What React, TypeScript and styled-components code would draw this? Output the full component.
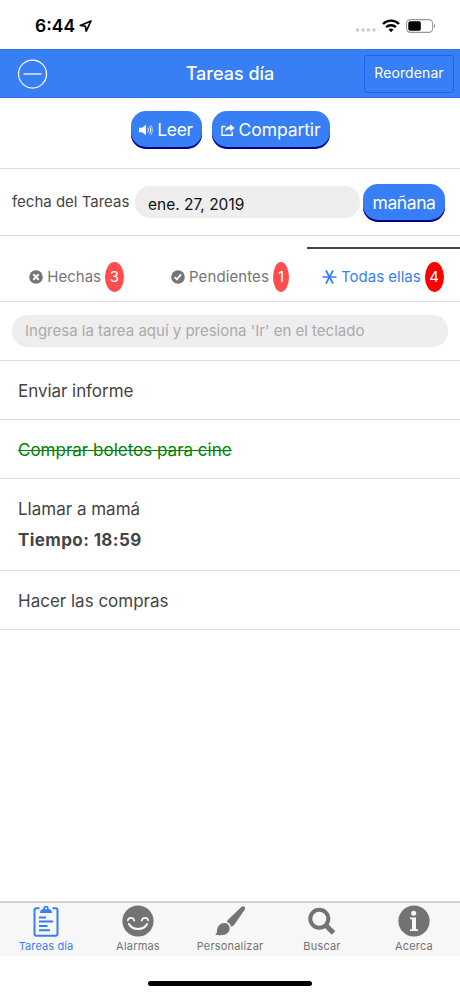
import React from "react";
import styled, { createGlobalStyle } from "styled-components";

const GlobalStyle = createGlobalStyle`
  *, *::before, *::after { box-sizing: border-box; }
  body { margin: 0; background: #fff; font-family: Inter, "Liberation Sans", sans-serif; }
  svg { display: block; flex: none; }
`;

const Screen = styled.div`
  width: 460px;
  height: 996px;
  display: flex;
  flex-direction: column;
  background: #fff;
  color: #444;
  overflow: hidden;
`;

const Text = styled.span<{ $size: number; $spacing?: number; $weight?: number }>`
  font-size: ${(p) => p.$size}px;
  letter-spacing: ${(p) => p.$spacing ?? 0}px;
  font-weight: ${(p) => p.$weight ?? 400};
  line-height: 24px;
  white-space: nowrap;
`;

const StatusBar = styled.div`
  height: 49px;
  flex: none;
  display: flex;
  align-items: center;
  justify-content: space-between;
  padding: 2px 24px 0 35px;
  color: #000;
`;

const StatusGroup = styled.div<{ $gap: number }>`
  display: flex;
  align-items: center;
  gap: ${(p) => p.$gap}px;
`;

const Header = styled.header`
  height: 49px;
  flex: none;
  display: grid;
  grid-template-columns: 1fr auto 1fr;
  align-items: center;
  background: #387ef5;
  border-top: 1px solid #3177e8;
  border-bottom: 1px solid #2a70eb;
  color: #fff;
  padding: 0 6px 0 6px;
`;

const HeaderStart = styled.div`
  padding-left: 12px;
`;

const ReorderButton = styled.button`
  justify-self: end;
  width: 90px;
  height: 38px;
  padding: 0 0 1px;
  display: flex;
  align-items: center;
  justify-content: center;
  border: 1px solid #1565ee;
  border-radius: 3px;
  background: transparent;
  color: #fff;
  font-family: inherit;
`;

const Actions = styled.section`
  height: 71px;
  flex: none;
  display: flex;
  justify-content: center;
  gap: 10px;
  padding-top: 13px;
  border-bottom: 1px solid #dcdcdc;
`;

const PillButton = styled.button<{ $width: number; $gap?: number }>`
  width: ${(p) => p.$width}px;
  height: 38px;
  padding: 0 0 1px;
  display: flex;
  align-items: center;
  justify-content: center;
  gap: ${(p) => p.$gap ?? 0}px;
  flex: none;
  border: 0;
  border-radius: 15px;
  background: #387ef5;
  box-shadow: inset 0 -2px 0 #00008b;
  color: #fff;
  font-family: inherit;
`;

const DateRow = styled.section`
  height: 67px;
  flex: none;
  display: flex;
  align-items: center;
  padding: 2px 15px 0 12px;
  border-bottom: 1px solid #dcdcdc;
`;

const DateLabel = styled.label`
  width: 123px;
  flex: none;
  padding-bottom: 2px;
`;

const DateField = styled.div`
  width: 225px;
  height: 32px;
  margin: 0 3px 2px 0;
  padding: 7px 0 0 13px;
  border-radius: 15px;
  background: #eee;
  color: #111;
`;

const Filters = styled.nav`
  height: 66px;
  flex: none;
  display: grid;
  grid-template-columns: repeat(3, 1fr);
  padding-top: 11px;
  border-bottom: 1px solid #dcdcdc;
`;

const Filter = styled.div<{ $active?: boolean }>`
  display: flex;
  align-items: center;
  justify-content: center;
  gap: 4px;
  padding: 4px ${(p) => (p.$active ? 1 : 0)}px 0 0;
  border-top: 2px solid ${(p) => (p.$active ? "#444" : "transparent")};
  color: ${(p) => (p.$active ? "#387ef5" : "#757575")};
`;

const Count = styled.span<{ $width: number; $active?: boolean }>`
  width: ${(p) => p.$width}px;
  height: 30px;
  display: flex;
  align-items: center;
  justify-content: center;
  border-radius: 50%;
  background: ${(p) => (p.$active ? "#f00" : "#ff4c4c")};
  color: #fff;
`;

const Entry = styled.section`
  height: 59px;
  flex: none;
  padding: 13px 12px 0;
  border-bottom: 1px solid #dcdcdc;
`;

const EntryField = styled.div`
  height: 32px;
  padding: 4px 13px;
  border-radius: 15px;
  background: #eee;
  color: #aaa;
`;

const TaskList = styled.ul`
  flex: 1;
  margin: 0;
  padding: 0;
  list-style: none;
`;

const Task = styled.li<{ $done?: boolean }>`
  display: flex;
  flex-direction: column;
  gap: 7px;
  padding: 18px 18px 16px;
  border-bottom: 1px solid #dcdcdc;
  color: ${(p) => (p.$done ? "#008000" : "#444")};
  span { align-self: flex-start; text-decoration: ${(p) => (p.$done ? "line-through" : "none")}; }
  span + span { margin-bottom: 2px; }
`;

const TabBar = styled.nav`
  height: 55px;
  flex: none;
  display: grid;
  grid-template-columns: repeat(5, 1fr);
  border-top: 2px solid #d2d2d2;
  background: #f7f7f7;
`;

const Tab = styled.div<{ $active?: boolean }>`
  display: flex;
  flex-direction: column;
  align-items: center;
  padding-top: 2px;
  color: ${(p) => (p.$active ? "#387ef5" : "#737373")};
  span { line-height: 16px; margin-top: 1px; }
`;

const HomeArea = styled.div`
  height: 40px;
  flex: none;
  display: flex;
  justify-content: center;
  padding-top: 25px;
`;

const HomeIndicator = styled.div`
  width: 164px;
  height: 5px;
  border-radius: 3px;
  background: #000;
`;

const LocationIcon = () => (
  <svg width="14" height="14" viewBox="0 0 14 14" fill="none" stroke="#000" strokeWidth="1.7" strokeLinejoin="round">
    <path d="M12 2 1.300 6.500l5 .7.9 5z" />
  </svg>
);

const SignalIcon = () => (
  <svg width="21" height="14" viewBox="0 0 21 14" fill="#ccc">
    <circle cx="2.500" cy="11" r="1.800" /><circle cx="8" cy="11" r="1.800" />
    <circle cx="13.500" cy="11" r="1.800" /><circle cx="19" cy="11" r="1.800" />
  </svg>
);

const WifiIcon = () => (
  <svg width="18" height="14" viewBox="0 0 18 14" fill="none" stroke="#000" strokeWidth="2.400">
    <path d="M1 5C5.400.5 12.600.5 17 5" /><path d="M4.100 8.200c2.700-2.700 7.100-2.700 9.800 0" />
    <path d="M6.500 10.500c1.400-1.400 3.600-1.400 5 0L9 13.200z" fill="#000" stroke="none" />
  </svg>
);

const BatteryIcon = () => (
  <svg width="30" height="14" viewBox="0 0 30 14">
    <rect x=".6" y=".6" width="26" height="12.8" rx="3.8" fill="none" stroke="#999" strokeWidth="1.1" />
    <rect x="2.3" y="2.3" width="12.5" height="9.4" rx="1.8" fill="#000" />
    <path d="M28 4.8v4.4c1.800-.8 1.800-3.600 0-4.400z" fill="#999" />
  </svg>
);

const MinusCircleIcon = () => (
  <svg width="30" height="30" viewBox="0 0 30 30" fill="none" stroke="#fff" strokeWidth="1.25">
    <circle cx="14.5" cy="15" r="14" /><path d="M5.5 15h18" />
  </svg>
);

const SpeakerIcon = () => (
  <svg width="14" height="12" viewBox="0 0 14 12" fill="none" stroke="#fff" strokeWidth="1">
    <path d="M0 3.800h3L7 .7v10.600L3 8.200H0z" fill="#fff" stroke="none" />
    <path d="M8.600 3.700c1.100 1.300 1.100 3.300 0 4.600M10.200 2.300c2 2.100 2 5.300 0 7.400" />
    <path d="M11.700 1c2.100 2.700 2.100 7.300 0 10" opacity=".7" />
  </svg>
);

const ShareIcon = () => (
  <svg width="14" height="12" viewBox="0 0 14 12">
    <path d="M4.500 2.500H1v8.700h10.200V7.800" fill="none" stroke="#fff" strokeWidth="1.400" />
    <path d="M9.200.3 13.700 4 9.200 7.400V5.200C6.700 5.100 5 5.900 3.700 8 4 5 5.800 2.600 9.200 2.300z" fill="#fff" />
  </svg>
);

const CloseCircleIcon = () => (
  <svg width="14" height="14" viewBox="0 0 14 14">
    <circle cx="7" cy="7" r="6.800" fill="#757575" />
    <path d="m4.300 4.300 5.400 5.400m0-5.400L4.300 9.700" stroke="#fff" strokeWidth="2" />
  </svg>
);

const CheckCircleIcon = () => (
  <svg width="14" height="14" viewBox="0 0 14 14">
    <circle cx="7" cy="7" r="6.800" fill="#757575" />
    <path d="m3.700 7.200 2.200 2.200 4.100-5" fill="none" stroke="#fff" strokeWidth="1.700" />
  </svg>
);

const AsteriskIcon = () => (
  <svg width="15" height="14" viewBox="0 0 15 14" fill="none" stroke="#387ef5" strokeWidth="1.700">
    <path d="M.5 7h14M4 .5l7 13M11 .5l-7 13" />
  </svg>
);

const ClipboardIcon = () => (
  <svg width="32" height="32" viewBox="0 0 32 32" fill="none" stroke="currentColor" strokeWidth="2">
    <path d="M9.500 3.300H6.500c-1.200 0-2 .8-2 2v23.500c0 1.200.8 2 2 2h19c1.200 0 2-.8 2-2V5.300c0-1.200-.8-2-2-2H22.500" />
    <path d="M10 7.900c0-2.400 1.200-3.400 3.200-3.800C13.300 2.200 14.100.8 16 .8s2.700 1.400 2.800 3.300c2 .4 3.200 1.400 3.200 3.800z" fill="currentColor" stroke="none" />
    <circle cx="16" cy="3.600" r="1" fill="#f7f7f7" stroke="none" />
    <path d="M9 12.500h7M9 16.600h14M9 20.900h8.500M9 25.200h11" />
  </svg>
);

const SmileIcon = () => (
  <svg width="32" height="32" viewBox="0 0 32 32" fill="none" stroke="#f7f7f7" strokeWidth="1.800" strokeLinecap="round">
    <circle cx="16" cy="16" r="15.600" fill="currentColor" stroke="none" />
    <path d="M5.800 15.300c.8-3.300 5.800-3 6.400.3M19.800 15.600c.6-3.300 5.600-3.600 6.400-.3" />
    <path d="M7 19c3.500 6.600 14.500 6.600 18 0" strokeWidth="2.100" />
  </svg>
);

const BrushIcon = () => (
  <svg width="32" height="32" viewBox="0 0 32 32" fill="currentColor">
    <path d="M27.600 1.800c2-1.500 4.500.6 3.200 2.700l-10.500 15.200c-.8 1-2.100 1.700-3.400 2-.3-2.500-1.600-4-4-4.800.4-1.300 1.300-2.500 2.200-3.200z" />
    <path d="M11.200 18c3.500.6 5.500 4.300 4 7.700-1.600 4-6.900 5.200-14.200 4.100 1.800-.9 1.900-2.100 2-4.500.3-4.500 4.100-8 8.200-7.300z" />
  </svg>
);

const SearchIcon = () => (
  <svg width="32" height="32" viewBox="0 0 32 32" fill="none" stroke="currentColor">
    <circle cx="13.300" cy="13.800" r="9" strokeWidth="4" /><path d="m19.500 20 8 8" strokeWidth="5" />
  </svg>
);

const InfoIcon = () => (
  <svg width="32" height="32" viewBox="0 0 32 32">
    <circle cx="16" cy="16" r="15.600" fill="currentColor" />
    <circle cx="15.700" cy="8.300" r="2.500" fill="#f7f7f7" />
    <path d="M12 12.600h6v11.700h2V26h-8v-1.700h2v-10h-2z" fill="#f7f7f7" />
  </svg>
);

export default function App() {
  return (
    <>
      <GlobalStyle />
      <Screen>
        <StatusBar>
          <StatusGroup $gap={4}>
            <Text $size={17.5} $weight={600}>6:44</Text>
            <LocationIcon />
          </StatusGroup>
          <StatusGroup $gap={6}>
            <SignalIcon />
            <WifiIcon />
            <BatteryIcon />
          </StatusGroup>
        </StatusBar>
        <Header>
          <HeaderStart><MinusCircleIcon /></HeaderStart>
          <Text $size={18} $weight={500}>Tareas día</Text>
          <ReorderButton><Text $size={14} $spacing={0.1}>Reordenar</Text></ReorderButton>
        </Header>
        <Actions>
          <PillButton $width={71} $gap={4}><SpeakerIcon /><Text $size={17.5} $spacing={-0.4}>Leer</Text></PillButton>
          <PillButton $width={118} $gap={4}><ShareIcon /><Text $size={17.5} $spacing={-0.1}>Compartir</Text></PillButton>
        </Actions>
        <DateRow>
          <DateLabel><Text $size={15}>fecha del Tareas</Text></DateLabel>
          <DateField><Text $size={15.5}>ene. 27, 2019</Text></DateField>
          <PillButton $width={82}><Text $size={17.5} $spacing={-0.4}>mañana</Text></PillButton>
        </DateRow>
        <Filters>
          <Filter><CloseCircleIcon /><Text $size={15}>Hechas</Text><Count $width={19}><Text $size={15}>3</Text></Count></Filter>
          <Filter><CheckCircleIcon /><Text $size={15} $spacing={0.1}>Pendientes</Text><Count $width={16}><Text $size={15}>1</Text></Count></Filter>
          <Filter $active><AsteriskIcon /><Text $size={15}>Todas ellas</Text><Count $width={19} $active><Text $size={15}>4</Text></Count></Filter>
        </Filters>
        <Entry>
          <EntryField><Text $size={15}>Ingresa la tarea aquí y presiona 'Ir' en el teclado</Text></EntryField>
        </Entry>
        <TaskList>
          <Task><Text $size={17} $spacing={-0.05}>Enviar informe</Text></Task>
          <Task $done><Text $size={17}>Comprar boletos para cine</Text></Task>
          <Task>
            <Text $size={17}>Llamar a mamá</Text>
            <Text $size={17} $weight={700} $spacing={0.4}>Tiempo: 18:59</Text>
          </Task>
          <Task><Text $size={17}>Hacer las compras</Text></Task>
        </TaskList>
        <TabBar>
          <Tab $active><ClipboardIcon /><Text $size={11} $spacing={0.1}>Tareas día</Text></Tab>
          <Tab><SmileIcon /><Text $size={11} $spacing={0.2}>Alarmas</Text></Tab>
          <Tab><BrushIcon /><Text $size={11} $spacing={0.2}>Personalizar</Text></Tab>
          <Tab><SearchIcon /><Text $size={11} $spacing={0.2}>Buscar</Text></Tab>
          <Tab><InfoIcon /><Text $size={11} $spacing={0.2}>Acerca</Text></Tab>
        </TabBar>
        <HomeArea><HomeIndicator /></HomeArea>
      </Screen>
    </>
  );
}
